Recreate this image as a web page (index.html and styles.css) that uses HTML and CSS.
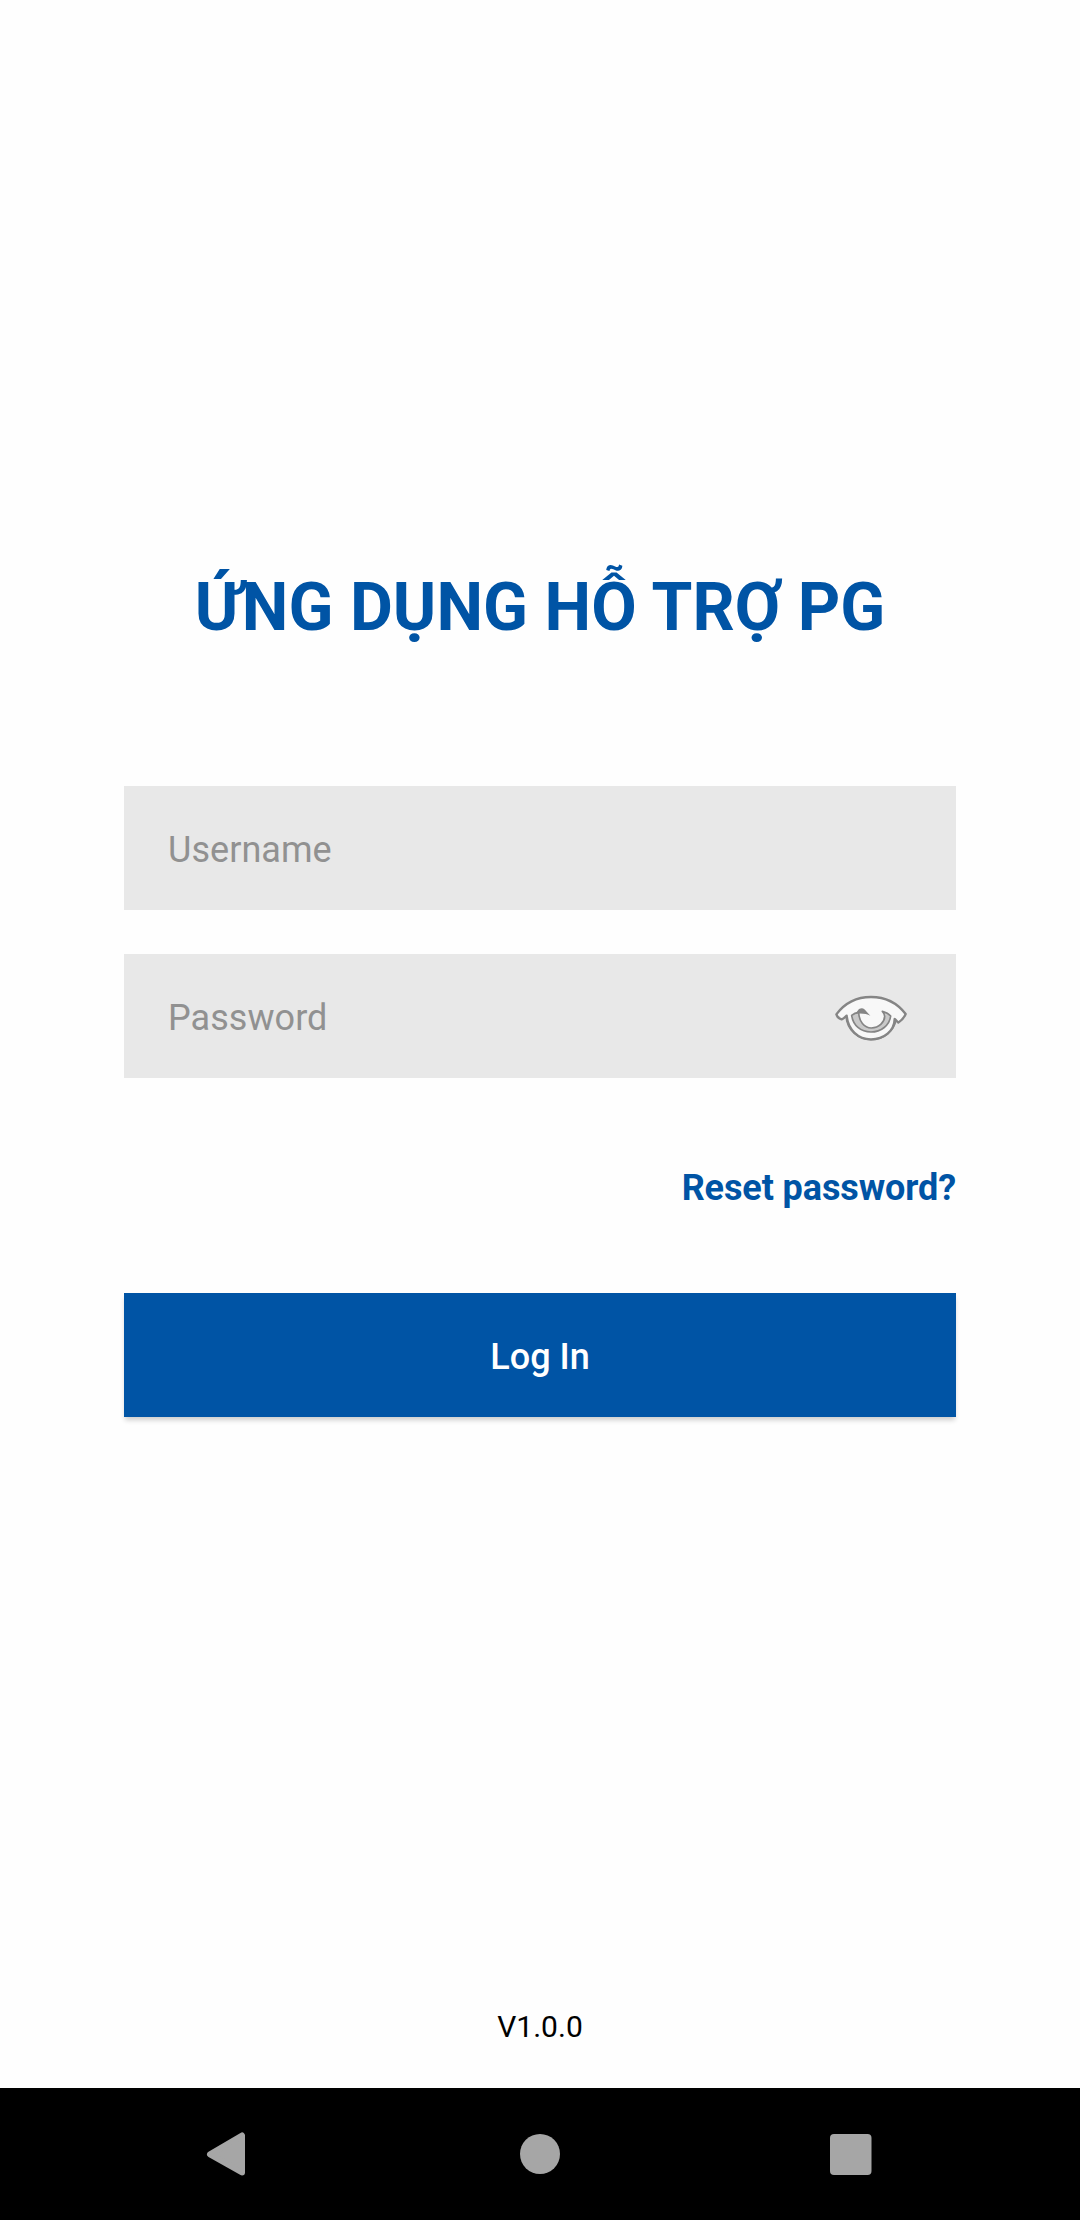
FILE: index.html
```html
<!DOCTYPE html>
<html lang="vi">
<head>
<meta charset="utf-8">
<title>Log In</title>
<link rel="stylesheet" href="styles.css">
</head>
<body>
<div class="screen">
  <main class="login">
    <h1 class="title">ỨNG DỤNG HỖ TRỢ PG</h1>
    <div class="field"><span class="label">Username</span></div>
    <div class="field">
      <span class="label">Password</span>
      <svg class="eye" viewBox="45 45 216 144" fill="#f8f8f8" stroke="#858585" stroke-width="7" stroke-linejoin="round">
        <path d="M79 108C82 150 115 178 153 178C191 178 222 151 227 119Z"/>
        <path d="M49 103C76 67 111 51 153 51C196 51 231 68 257 102C253 112 245 121 235 128C231 125 228 120 224 117C223 153 192 178 153 178C114 178 84 149 80 107C74 113 70 116 65 118C58 116 51 111 49 103Z"/>
        <path fill="#c9c9c9" stroke-width="5" d="M95 106C101 101 108 98 116 97C117 124 132 144 154 144C178 144 194 125 194 109C194 103 191 98 187 94C198 97 206 101 212 108C209 136 183 156 153 156C122 156 99 136 95 106Z"/>
        <path fill="#858585" stroke="none" d="M117 87C129 81 134 88 138 93L151 107C140 102 129 99 106 101Z"/>
      </svg>
    </div>
    <a class="reset">Reset password?</a>
    <button class="submit">Log In</button>
    <p class="version">V1.0.0</p>
  </main>
  <nav class="navbar">
    <svg class="nav-icon" viewBox="0 0 80 90"><path d="M20 44.3L52 25.5V62.5Z" fill="#a6a6a6" stroke="#a6a6a6" stroke-width="6" stroke-linejoin="round"/></svg>
    <svg class="nav-icon" viewBox="0 0 80 90"><circle cx="40" cy="44" r="20" fill="#a6a6a6"/></svg>
    <svg class="nav-icon" viewBox="0 0 80 90"><rect x="20" y="24" width="41.5" height="41" rx="4" fill="#a6a6a6"/></svg>
  </nav>
</div>
</body>
</html>
```
FILE: styles.css
```css
* { box-sizing: border-box; }
body { margin: 0; background: #fefefe; font-family: Roboto, sans-serif; }
.screen { display: flex; flex-direction: column; height: 2220px; }
.login { flex: 1; display: flex; flex-direction: column; padding: 569px 124px 43px; }
.title { margin: 0 0 139px; font-size: 66px; line-height: 78px; font-weight: 700; color: #0054a5; text-align: center; white-space: nowrap; letter-spacing: .05px; }
.field { display: flex; align-items: center; justify-content: space-between; height: 124px; margin-bottom: 44px; padding: 4px 49px 0 44px; background: #e8e8e8; }
.label { font-size: 36px; color: #919191; letter-spacing: .05px; }
.eye { width: 72px; height: 48px; margin-top: 2px; }
.reset { align-self: flex-end; margin: 45px 0 83px; font-size: 36px; line-height: 43px; font-weight: 700; color: #0054a5; letter-spacing: -.1px; }
.submit { height: 124px; border: 0; padding: 4px 0 0; background: #0054a5; color: #fff; font-family: inherit; font-size: 36px; font-weight: 500; box-shadow: 0 4px 5px -1px rgba(0, 0, 0, .2); }
.version { margin: auto 0 0; text-align: center; font-size: 30px; line-height: 36px; color: #000; }
.navbar { display: flex; justify-content: space-between; align-items: center; height: 132px; padding: 2px 190px 0; background: #000; }
.nav-icon { width: 80px; height: 90px; }
```
